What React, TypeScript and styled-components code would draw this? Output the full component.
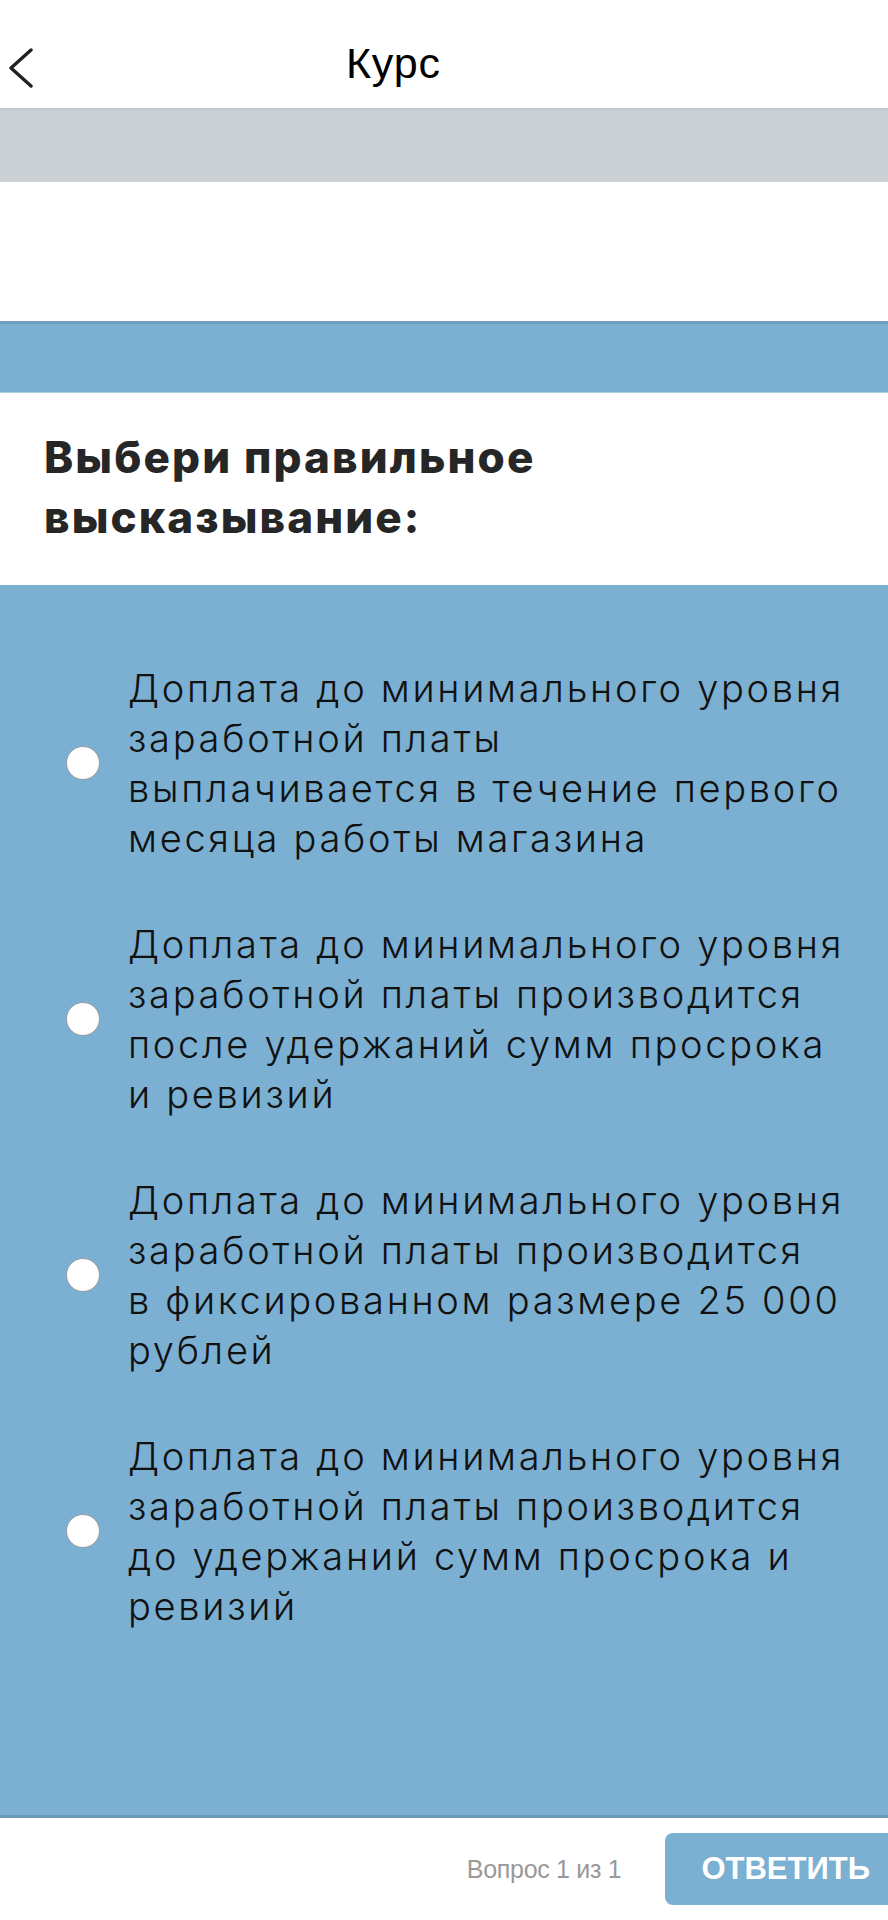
import React from "react";
import styled, { createGlobalStyle } from "styled-components";

const Global = createGlobalStyle`
  html, body { margin: 0; padding: 0; background: #ffffff; }
  body { overflow-x: hidden; font-family: "Liberation Sans", Arial, sans-serif; }
  * { box-sizing: border-box; }
`;

const Page = styled.div`
  width: 888px;
  height: 1920px;
  display: flex;
  flex-direction: column;
  overflow: hidden;
`;

const Header = styled.header`
  height: 108px;
  flex: none;
  display: flex;
  align-items: flex-start;
  background: #ffffff;
`;

const BackButton = styled.button`
  border: 0;
  background: transparent;
  padding: 0;
  margin: 48px 0 0 7px;
  width: 28px;
  height: 40px;
  display: flex;
`;

const Title = styled.h1`
  margin: 42px 0 0 311px;
  font-family: "Liberation Sans", Arial, sans-serif;
  font-weight: 400;
  font-size: 43px;
  line-height: 42px;
  color: #000000;
  letter-spacing: 0.8px;
`;

const ProgressBand = styled.div`
  height: 74px;
  flex: none;
  background: #cbd0d4;
  border-top: 2px solid #c2c6ca;
`;

const Spacer = styled.div`
  height: 139px;
  flex: none;
  background: #ffffff;
`;

const AccentBand = styled.div`
  height: 72px;
  flex: none;
  background: #7bb0d2;
  border-top: 3px solid #6e9fbf;
  border-bottom: 1px solid #a9cfe4;
`;

const QuestionBox = styled.section`
  flex: none;
  height: 192px;
  padding: 34px 44px 0;
  background: #ffffff;
`;

const QuestionText = styled.h2`
  margin: 0;
  font-family: Inter, "Noto Sans", sans-serif;
  font-weight: 800;
  font-size: 44px;
  line-height: 60px;
  color: #262626;
  white-space: pre-line;
  letter-spacing: 2.1px;
`;

const Answers = styled.div`
  flex: 1;
  background: #7bb0d2;
  border-bottom: 3px solid #6b98b6;
  padding: 78px 10px 0 66px;
  display: flex;
  flex-direction: column;
  gap: 56px;
`;

const Option = styled.label`
  display: flex;
  align-items: center;
  gap: 28px;
  cursor: pointer;
`;

const Radio = styled.span`
  flex: none;
  width: 34px;
  height: 34px;
  border-radius: 50%;
  background: #ffffff;
  border: 1.5px solid #9a9a9a;
`;

const OptionText = styled.span`
  font-family: Inter, "Noto Sans", sans-serif;
  font-weight: 300;
  font-size: 38px;
  line-height: 50px;
  color: #111111;
  white-space: pre-line;
  letter-spacing: 2.7px;
`;

const Footer = styled.footer`
  height: 102px;
  flex: none;
  background: #ffffff;
  display: flex;
  align-items: center;
  justify-content: flex-end;
  gap: 44px;
`;

const Counter = styled.span`
  font-family: "Liberation Sans", Arial, sans-serif;
  font-size: 25px;
  color: #999999;
  letter-spacing: -0.3px;
`;

const SubmitButton = styled.button`
  height: 72px;
  margin-right: -30px;
  padding: 0 48px 0 36px;
  border: 0;
  border-radius: 8px;
  background: #7bb0d2;
  color: #ffffff;
  font-family: "Liberation Sans", Arial, sans-serif;
  font-weight: 700;
  font-size: 31px;
  letter-spacing: 0px;
`;

const answers = [
  "Доплата до минимального уровня\nзаработной платы\nвыплачивается в течение первого\nмесяца работы магазина",
  "Доплата до минимального уровня\nзаработной платы производится\nпосле удержаний сумм просрока\nи ревизий",
  "Доплата до минимального уровня\nзаработной платы производится\nв фиксированном размере 25 000\nрублей",
  "Доплата до минимального уровня\nзаработной платы производится\nдо удержаний сумм просрока и\nревизий",
];

export default function App() {
  return (
    <>
      <Global />
      <Page>
        <Header>
          <BackButton aria-label="Назад">
            <svg width="28" height="40" viewBox="0 0 28 40">
              <path d="M24 2 L4 20 L24 38" fill="none" stroke="#222" strokeWidth="3.4" strokeLinecap="round" strokeLinejoin="round" />
            </svg>
          </BackButton>
          <Title>Курс</Title>
        </Header>
        <ProgressBand />
        <Spacer />
        <AccentBand />
        <QuestionBox>
          <QuestionText>{"Выбери правильное\nвысказывание:"}</QuestionText>
        </QuestionBox>
        <Answers>
          {answers.map((a, i) => (
            <Option key={i}>
              <Radio />
              <OptionText>{a}</OptionText>
            </Option>
          ))}
        </Answers>
        <Footer>
          <Counter>Вопрос 1 из 1</Counter>
          <SubmitButton>ОТВЕТИТЬ</SubmitButton>
        </Footer>
      </Page>
    </>
  );
}
